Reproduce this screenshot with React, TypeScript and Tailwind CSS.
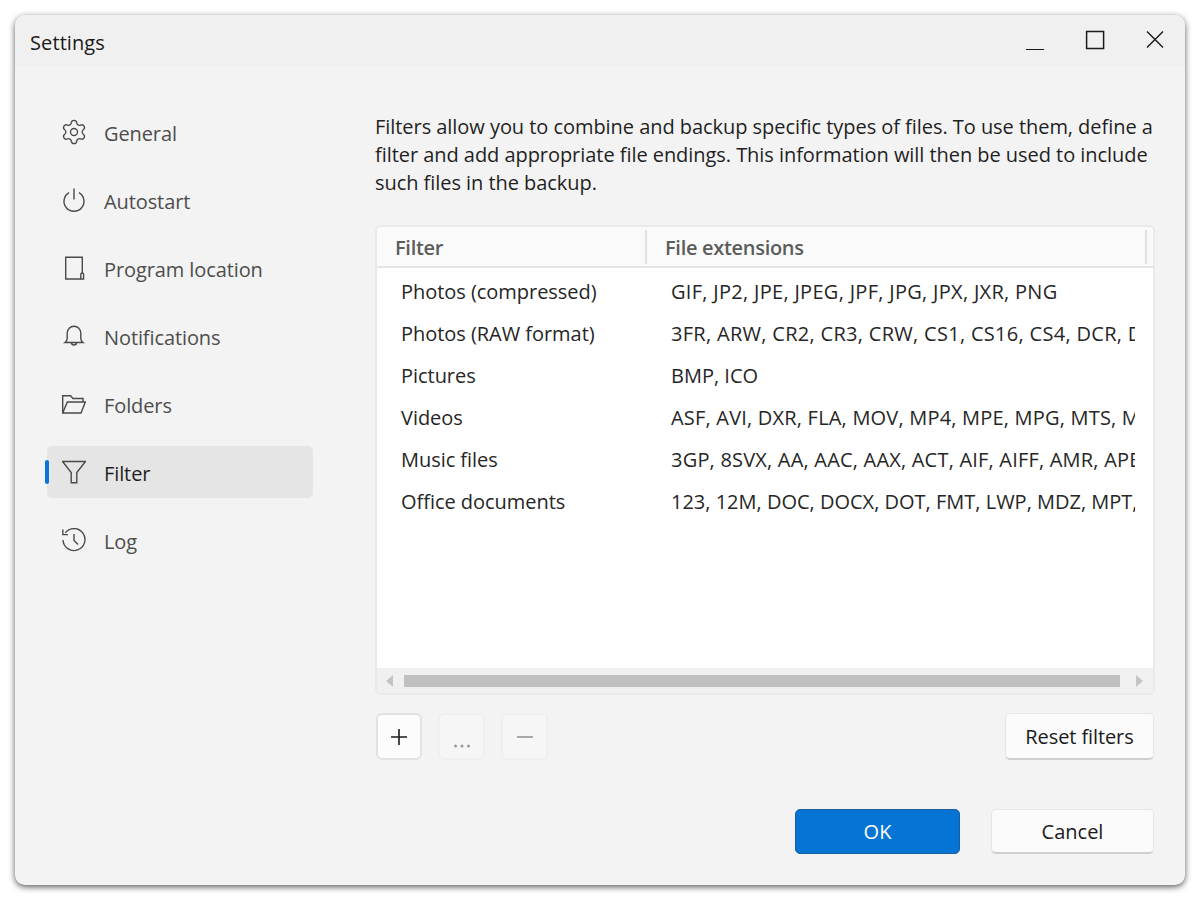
import React from "react";
import { Settings as Gear } from "lucide-react";

const I = ({ children }: { children: React.ReactNode }) => (
  <svg width="24" height="24" viewBox="0 0 24 24" fill="none" stroke="#4a4a4a" strokeWidth="1.4" className="shrink-0">
    {children}
  </svg>
);

const nav: { label: string; icon: React.ReactNode; active?: boolean }[] = [
  { label: "General", icon: <Gear size={28} strokeWidth={1.15} color="#4a4a4a" className="shrink-0 -ml-[2px] -mr-[2px]" /> },
  {
    label: "Autostart",
    icon: (
      <I>
        <path d="M7 4.600a10 10 0 1 0 10 0" />
        <path d="M12 0.500V11.500" />
      </I>
    ),
  },
  {
    label: "Program location",
    icon: (
      <I>
        <path d="M18.800 23H3.700V1.300H20.300V17" />
        <path d="M20.300 17a1.300 1.300 0 0 1 1.300 1.300V23H18.800V18.300a1.300 1.300 0 0 1 1.500-1.300Z" />
      </I>
    ),
  },
  {
    label: "Notifications",
    icon: (
      <I>
        <path d="M3 18.500c1.300-1 2.200-2.300 2.200-4V9a6.800 6.800 0 0 1 13.600 0v5.500c0 1.700.9 3 2.200 4Z" />
        <path d="M9.500 18.500a2.500 2.500 0 0 0 5 0" />
      </I>
    ),
  },
  {
    label: "Folders",
    icon: (
      <I>
        <path d="M0.700 21V3.700H8.500L11 6.500H21V10" />
        <path d="M0.700 21H19L23.300 10H5.300L0.700 21Z" />
      </I>
    ),
  },
  {
    label: "Filter",
    active: true,
    icon: (
      <I>
        <path d="M0.500 1.500H23.500L14.800 12.500V22.700H9.200V12.500Z" />
      </I>
    ),
  },
  {
    label: "Log",
    icon: (
      <I>
        <path d="M3.300 4.800A11 11 0 1 1 1 12" />
        <path d="M0.800 1.500V6.600H6" />
        <path d="M12 6V12.500L16 16.500" />
      </I>
    ),
  },
];

const rows = [
  ["Photos (compressed)", "GIF, JP2, JPE, JPEG, JPF, JPG, JPX, JXR, PNG", "tracking-[0.3px]"],
  ["Photos (RAW format)", "3FR, ARW, CR2, CR3, CRW, CS1, CS16, CS4, DCR, DNG, ERF, KDC, MEF, NEF", "tracking-[0.3px]"],
  ["Pictures", "BMP, ICO", "tracking-[0px]"],
  ["Videos", "ASF, AVI, DXR, FLA, MOV, MP4, MPE, MPG, MTS, MKV, OGV, WMV", "tracking-[0.2px]"],
  ["Music files", "3GP, 8SVX, AA, AAC, AAX, ACT, AIF, AIFF, AMR, APE, AU, FLAC, MP3", "tracking-[0.2px]"],
  ["Office documents", "123, 12M, DOC, DOCX, DOT, FMT, LWP, MDZ, MPT, ODP, ODT, PDF, XLS", "tracking-[0px]"],
];

export default function App() {
  return (
    <div className="w-[1200px] h-[900px] bg-white p-[15px] [font-family:'Open_Sans','Noto_Sans',sans-serif] text-[20px]">
      <div className="w-[1170px] h-[870px] bg-[#f3f3f3] rounded-[10px] overflow-hidden shadow-[0_2px_6px_rgba(0,0,0,0.65)] flex flex-col">
        <div className="h-[51px] shrink-0 bg-[#f0f0f0] flex items-center pl-[15px] text-[#1a1a1a]">
          <span className="flex-1 tracking-[0.1px] pt-[4px]">Settings</span>
          <svg width="150" height="30" viewBox="0 0 150 30" fill="none" stroke="#1a1a1a" className="mr-[21px] -mt-[1px]">
            <path d="M12 24.500H30" strokeWidth="1.2" />
            <rect x="72.600" y="6.500" width="17" height="17" strokeWidth="1.5" />
            <path d="M133 6.500L149 22.500M149 6.500L133 22.500" strokeWidth="1.4" />
          </svg>
        </div>
        <div className="flex-1 flex pl-[32px]">
          <nav className="w-[266px] shrink-0 pt-[40px] flex flex-col gap-[16px]">
            {nav.map((n) => (
              <div
                key={n.label}
                className={`relative h-[52px] flex items-center gap-[18px] pl-[15px] rounded-[5px] ${n.active ? "bg-[#e5e5e5] text-[#1f1f1f]" : "text-[#4d4d4d]"}`}
              >
                {n.active && <span className="absolute -left-[2px] top-[14px] w-[4px] h-[24px] rounded-full bg-[#0a74da]" />}
                {n.icon}
                <span className="pt-[3px] tracking-[-0.1px]">{n.label}</span>
              </div>
            ))}
          </nav>
          <main className="ml-[62px] w-[780px] flex flex-col pt-[47px]">
            <p className="leading-[28px] text-[#1f1f1f] whitespace-nowrap tracking-[-0.05px]">
              Filters allow you to combine and backup specific types of files. To use them, define a<br />
              filter and add appropriate file endings. This information will then be used to include<br />
              such files in the backup.
            </p>
            <div className="mt-[28px] w-[780px] h-[470px] rounded-[6px] border-2 border-[#e9e9ec] bg-white overflow-hidden flex flex-col">
              <div className="h-[41px] shrink-0 bg-[#fafafa] border-b-2 border-[#e5e5e5] flex items-center font-semibold text-[#5c5c5c] tracking-[-0.3px]">
                <div className="w-[270px] h-[34px] pl-[18px] flex items-center border-r-2 border-[#e0e0e0] pt-[3px]">Filter</div>
                <div className="w-[500px] h-[34px] pl-[18px] flex items-center border-r-2 border-[#e0e0e0] pt-[3px]">File extensions</div>
              </div>
              <div className="flex-1 pt-[2px]">
                {rows.map(([a, b, t]) => (
                  <div key={a} className="h-[42px] flex items-center text-[#262626] pt-[1px]">
                    <div className="w-[294px] pl-[24px] shrink-0 whitespace-nowrap tracking-[-0.04px]">{a}</div>
                    <div className={`w-[464px] overflow-hidden whitespace-nowrap ${t}`}>{b}</div>
                  </div>
                ))}
              </div>
              <div className="h-[25px] shrink-0 bg-[#f0f0f0] flex items-center pl-[8px] gap-[10px]">
                <svg width="9" height="12" viewBox="0 0 9 12" fill="#c4c4c4" className="shrink-0"><path d="M8 0V12L1 6Z" /></svg>
                <div className="w-[716px] h-[12px] bg-[#c0c0c0]" />
                <svg width="9" height="12" viewBox="0 0 9 12" fill="#c4c4c4" className="shrink-0 ml-[5px]"><path d="M1 0V12L8 6Z" /></svg>
              </div>
            </div>
            <div className="mt-[18px] ml-[1px] flex items-center">
              <button className="w-[46px] h-[47px] rounded-[6px] border-2 border-[#e2e2e2] bg-[#fcfcfc] flex items-center justify-center">
                <svg width="18" height="18" viewBox="0 0 18 18" stroke="#1a1a1a" strokeWidth="1.6"><path d="M9 1V17M1 9H17" /></svg>
              </button>
              <button className="ml-[16px] w-[47px] h-[47px] rounded-[6px] border-2 border-[#efefef] bg-[#f6f6f6] flex items-end justify-center pb-[10px]">
                <svg width="18" height="4" viewBox="0 0 18 4" fill="#9a9a9a"><circle cx="2.500" cy="2" r="1.500" /><circle cx="9" cy="2" r="1.500" /><circle cx="15.500" cy="2" r="1.500" /></svg>
              </button>
              <button className="ml-[16px] w-[47px] h-[47px] rounded-[6px] border-2 border-[#efefef] bg-[#f6f6f6] flex items-center justify-center">
                <svg width="16" height="2" viewBox="0 0 16 2" fill="#a8a8a8"><rect width="16" height="2" /></svg>
              </button>
              <button className="ml-auto mr-px w-[149px] h-[47px] pt-[1px] rounded-[5px] border border-[#e6e6e6] border-b-2 border-b-[#cfcfcf] bg-[#fbfbfb] text-[#1a1a1a] tracking-[-0.1px]">
                Reset filters
              </button>
            </div>
            <div className="mt-[49px] mr-px flex justify-end items-center">
              <button className="w-[165px] h-[45px] rounded-[5px] bg-[#0574d4] border border-[#1a5e9e] text-white">OK</button>
              <button className="ml-[31px] w-[163px] h-[45px] pt-[1px] rounded-[5px] border border-[#e6e6e6] border-b-2 border-b-[#cfcfcf] bg-[#fbfbfb] text-[#1a1a1a]">
                Cancel
              </button>
            </div>
          </main>
        </div>
      </div>
    </div>
  );
}
